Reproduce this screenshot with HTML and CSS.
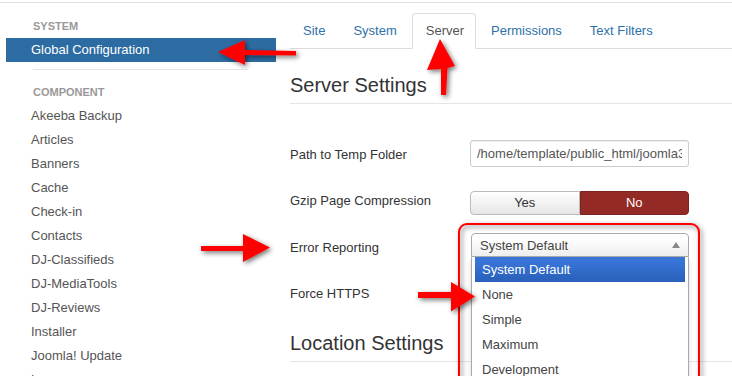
FILE: index.html
```html
<!DOCTYPE html>
<html lang="en">
<head>
    <meta charset="UTF-8">
    <meta name="viewport" content="width=device-width, initial-scale=1.0">
    <title>Global Configuration - Server</title>
    <link rel="stylesheet" href="styles.css">
</head>
<body>
    <div class="topline"></div>
    <div class="page">
        <aside class="sidebar">
            <div class="nav-header">System</div>
            <a class="nav-item active" href="#">Global Configuration</a>
            <div class="divider"></div>
            <div class="nav-header header-component">Component</div>
            <a class="nav-item" href="#">Akeeba Backup</a>
            <a class="nav-item" href="#">Articles</a>
            <a class="nav-item" href="#">Banners</a>
            <a class="nav-item" href="#">Cache</a>
            <a class="nav-item" href="#">Check-in</a>
            <a class="nav-item" href="#">Contacts</a>
            <a class="nav-item" href="#">DJ-Classifieds</a>
            <a class="nav-item" href="#">DJ-MediaTools</a>
            <a class="nav-item" href="#">DJ-Reviews</a>
            <a class="nav-item" href="#">Installer</a>
            <a class="nav-item" href="#">Joomla! Update</a>
            <a class="nav-item" href="#">Languages</a>
        </aside>

        <main class="content">
            <ul class="nav-tabs">
                <li><a href="#">Site</a></li>
                <li><a href="#">System</a></li>
                <li class="active"><a href="#">Server</a></li>
                <li><a href="#">Permissions</a></li>
                <li><a href="#">Text Filters</a></li>
            </ul>

            <h3 class="legend">Server Settings</h3>

            <div class="form">
                <div class="control-group">
                    <label class="control-label">Path to Temp Folder</label>
                    <input class="text-input" type="text" value="/home/template/public_html/joomla3/tmp" readonly>
                </div>
                <div class="control-group">
                    <label class="control-label">Gzip Page Compression</label>
                    <div class="btn-group">
                        <span class="btn">Yes</span>
                        <span class="btn btn-no">No</span>
                    </div>
                </div>
                <div class="control-group">
                    <label class="control-label">Error Reporting</label>
                    <div class="chzn-container">
                        <div class="chzn-single">
                            <span>System Default</span>
                            <span class="caret-up"></span>
                        </div>
                        <div class="chzn-drop">
                            <ul class="chzn-results">
                                <li class="highlighted">System Default</li>
                                <li>None</li>
                                <li>Simple</li>
                                <li>Maximum</li>
                                <li>Development</li>
                            </ul>
                        </div>
                    </div>
                </div>
                <div class="control-group">
                    <label class="control-label">Force HTTPS</label>
                </div>
            </div>

            <h3 class="legend legend-location">Location Settings</h3>
        </main>
    </div>

    <!-- red markup drawn over the screenshot -->
    <svg class="annotations" width="732" height="376" viewBox="0 0 732 376">
        <defs>
            <filter id="shadow" x="-20%" y="-20%" width="140%" height="140%">
                <feDropShadow dx="2" dy="2" stdDeviation="2.5" flood-color="#000" flood-opacity="0.55"/>
            </filter>
        </defs>
        <rect x="459" y="224" width="240" height="200" rx="8" ry="8" fill="none" stroke="#f00" stroke-width="2" filter="url(#shadow)"/>
        <polygon points="218,52 245,40 245,50 296,51 296,55.5 245,55 245,65" fill="#f00" filter="url(#shadow)"/>
        <polygon points="440,39 455,66 447.5,68 446,95 441,95 441,69 427,70" fill="#f00" filter="url(#shadow)"/>
        <polygon points="201,246 243,246 243,234 270,247.5 243,262 243,251 201,251" fill="#f00" filter="url(#shadow)"/>
        <polygon points="418,292 451,292 451,282 475,296.5 451,311.5 451,298 418,298" fill="#f00" filter="url(#shadow)"/>
    </svg>
</body>
</html>
```

FILE: styles.css
```css
body {
    font-family: 'Liberation Sans', Arial, sans-serif;
    font-size: 13px;
    color: #333;
    background-color: #fff;
    margin: 0;
    padding: 0;
    height: 376px;
    overflow: hidden;
    position: relative;
}

.topline {
    height: 2px;
    border-bottom: 1px solid #e0e0e0;
}

.page {
    display: flex;
}

/* sidebar */

.sidebar {
    width: 270px;
    margin-left: 6px;
    padding-top: 15px;
    display: flex;
    flex-direction: column;
    flex-shrink: 0;
}

.nav-header {
    padding-left: 27px;
    font-size: 11px;
    font-weight: bold;
    line-height: 16px;
    color: #999;
    text-transform: uppercase;
}

.header-component {
    margin-top: 14px;
}

.nav-item {
    display: block;
    height: 24px;
    line-height: 24px;
    padding-left: 25px;
    color: #555;
    text-decoration: none;
}

.nav-item.active {
    margin-top: 4px;
    background-color: #2d6ca2;
    color: #fff;
}

.header-component + .nav-item {
    margin-top: 4px;
}

.divider {
    height: 1px;
    margin: 7px 28px 0 27px;
    background-color: #e5e5e5;
}

/* content */

.content {
    flex: 1;
    margin-left: 14px;
    min-width: 0;
}

.nav-tabs {
    list-style: none;
    margin: 10px 0 0 0;
    padding: 0;
    display: flex;
    border-bottom: 1px solid #ddd;
}

.nav-tabs li {
    margin-bottom: -1px;
    margin-right: 2px;
}

.nav-tabs a {
    display: block;
    padding: 8px 12px;
    line-height: 18px;
    border: 1px solid transparent;
    border-radius: 4px 4px 0 0;
    color: #3071a9;
    text-decoration: none;
}

.nav-tabs .active a {
    padding: 8px 11px 8px 13px;
    color: #555;
    background-color: #fff;
    border-color: #ddd #ddd transparent;
}

.legend {
    margin: 24px 0 0 0;
    padding-bottom: 6px;
    font-size: 20px;
    font-weight: normal;
    line-height: 24px;
    color: #333;
    border-bottom: 1px solid #e5e5e5;
}

.legend-location {
    margin-top: 5px;
}

.form {
    margin-top: 36px;
}

.control-group {
    display: flex;
    align-items: flex-start;
    height: 46.5px;
}

.control-label {
    width: 180px;
    flex-shrink: 0;
    padding-top: 5.5px;
    line-height: 18px;
    color: #333;
}

.text-input {
    width: 219px;
    height: 27px;
    box-sizing: border-box;
    margin: 0;
    padding: 0 6px;
    border: 1px solid #ccc;
    border-radius: 3px;
    box-shadow: inset 0 1px 1px rgba(0, 0, 0, 0.075);
    font-family: inherit;
    font-size: 13px;
    color: #555;
    outline: none;
}

.btn-group {
    display: flex;
    width: 219px;
    margin-top: 4.5px;
}

.btn {
    flex: 1;
    height: 24px;
    box-sizing: border-box;
    line-height: 22px;
    text-align: center;
    color: #333;
    border: 1px solid #bbb;
    border-radius: 4px 0 0 4px;
    background: linear-gradient(#fff, #e6e6e6);
}

.btn-no {
    color: #fff;
    border-color: #7d231f;
    border-radius: 0 4px 4px 0;
    background: #942a25;
}

/* chosen style dropdown */

.chzn-container {
    position: relative;
    width: 218px;
    margin: 0 0 0 1px;
    z-index: 2;
}

.chzn-single {
    height: 24px;
    box-sizing: border-box;
    display: flex;
    align-items: center;
    justify-content: space-between;
    padding: 0 8px;
    border: 1px solid #aaa;
    border-radius: 4px 4px 0 0;
    background: linear-gradient(#fff 20%, #eee);
    color: #444;
}

.caret-up {
    width: 0;
    height: 0;
    border-left: 4px solid transparent;
    border-right: 4px solid transparent;
    border-bottom: 6px solid #888;
}

.chzn-drop {
    position: absolute;
    top: 24px;
    left: 0;
    width: 218px;
    height: 140px;
    box-sizing: border-box;
    background-color: #fff;
    border: 1px solid #aaa;
    border-top: none;
    box-shadow: 0 4px 5px rgba(0, 0, 0, 0.15);
}

.chzn-results {
    list-style: none;
    margin: 0;
    padding: 0 3px;
}

.chzn-results li {
    height: 25px;
    line-height: 25px;
    padding: 0 7px;
    color: #444;
}

.chzn-results li.highlighted {
    color: #fff;
    background: linear-gradient(#3875d7 20%, #2a62bc 90%);
}

.annotations {
    position: absolute;
    top: 0;
    left: 0;
    pointer-events: none;
    z-index: 5;
}
```
